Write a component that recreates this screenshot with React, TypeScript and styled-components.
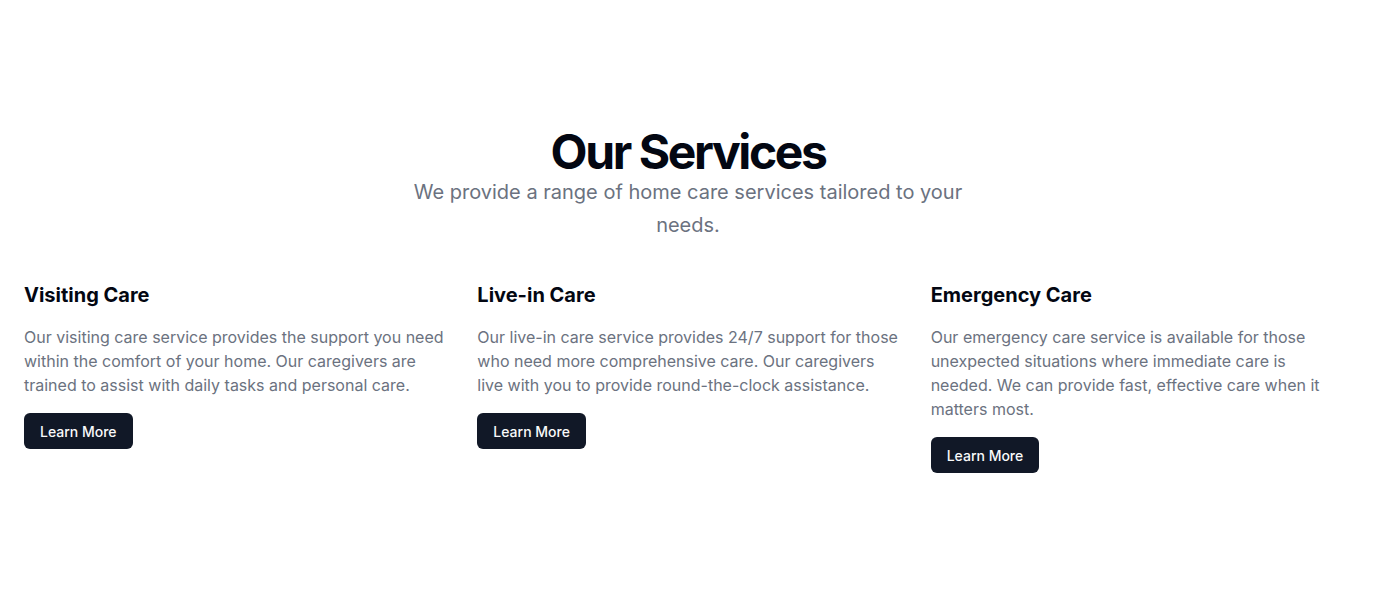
import React from "react";
import styled, { createGlobalStyle } from "styled-components";

const Global = createGlobalStyle`
  html, body { margin: 0; padding: 0; background: #ffffff; }
  body { font-family: Inter, "Noto Sans", sans-serif; -webkit-font-smoothing: antialiased; }
  * { box-sizing: border-box; }
`;

const Section = styled.section`
  width: 100%;
  padding: 128px 0 96px;
  background: #ffffff;
`;

const Container = styled.div`
  padding: 0 24px;
  display: flex;
  flex-direction: column;
  align-items: center;
`;

const Header = styled.div`
  display: flex;
  flex-direction: column;
  align-items: center;
  text-align: center;
  gap: 0;
`;

const Title = styled.h2`
  margin: 0;
  font-size: 48px;
  line-height: 1;
  font-weight: 700;
  letter-spacing: -0.05em;
  color: #030712;
`;

const Subtitle = styled.p`
  margin: 0;
  max-width: 600px;
  font-size: 20px;
  line-height: 32.5px;
  color: #6b7280;
`;

const Grid = styled.div`
  width: 100%;
  margin-top: 40px;
  display: grid;
  grid-template-columns: repeat(3, 1fr);
  gap: 32px;
`;

const Card = styled.div`
  display: flex;
  flex-direction: column;
  align-items: flex-start;
  gap: 16px;
`;

const CardTitle = styled.h3`
  margin: 0;
  font-size: 20px;
  line-height: 28px;
  font-weight: 700;
  color: #030712;
`;

const CardText = styled.p`
  margin: 0;
  padding-right: 0.5px;
  font-size: 16px;
  line-height: 24px;
  color: #6b7280;
`;

const Button = styled.button`
  height: 36px;
  padding: 0 16px;
  border: none;
  border-radius: 6px;
  background: #111827;
  color: #f9fafb;
  font-family: Inter, "Noto Sans", sans-serif;
  font-size: 14px;
  font-weight: 500;
  cursor: pointer;
`;

const services = [
  {
    title: "Visiting Care",
    text: "Our visiting care service provides the support you need within the comfort of your home. Our caregivers are trained to assist with daily tasks and personal care.",
  },
  {
    title: "Live-in Care",
    text: "Our live-in care service provides 24/7 support for those who need more comprehensive care. Our caregivers live with you to provide round-the-clock assistance.",
  },
  {
    title: "Emergency Care",
    text: "Our emergency care service is available for those unexpected situations where immediate care is needed. We can provide fast, effective care when it matters most.",
  },
];

export default function App() {
  return (
    <>
      <Global />
      <Section>
        <Container>
          <Header>
            <Title>Our Services</Title>
            <Subtitle>We provide a range of home care services tailored to your needs.</Subtitle>
          </Header>
          <Grid>
            {services.map((s) => (
              <Card key={s.title}>
                <CardTitle>{s.title}</CardTitle>
                <CardText>{s.text}</CardText>
                <Button>Learn More</Button>
              </Card>
            ))}
          </Grid>
        </Container>
      </Section>
    </>
  );
}
